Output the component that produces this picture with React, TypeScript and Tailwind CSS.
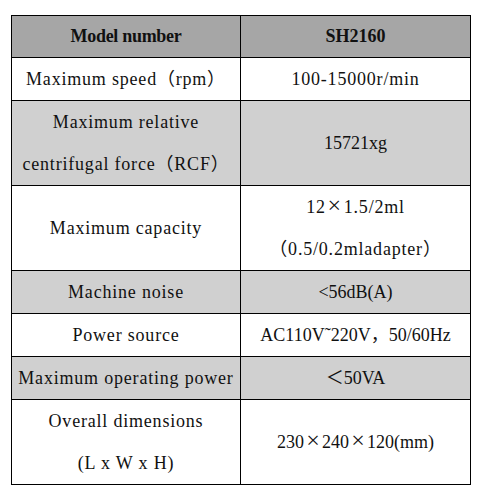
import React from "react";

type Cell = { lines: React.ReactNode[]; serif?: boolean };
type Row = { left: Cell; right: Cell; shade?: boolean };

// SimSun-style full width multiplication sign
const X = () => <span className="inline-block w-[18px] text-center text-[24px] leading-none font-light">×</span>;

const data: Row[] = [
  { left: { lines: ["Maximum speed（rpm）"] }, right: { lines: ["100-15000r/min"] } },
  {
    left: { lines: ["Maximum relative", "centrifugal force（RCF）"] },
    right: { lines: ["15721xg"], serif: true },
    shade: true,
  },
  {
    left: { lines: ["Maximum capacity"] },
    right: {
      lines: [
        <>
          12<X />1.5/2ml
        </>,
        "（0.5/0.2mladapter）",
      ],
    },
  },
  { left: { lines: ["Machine noise"] }, right: { lines: ["<56dB(A)"], serif: true }, shade: true },
  { left: { lines: ["Power source"] }, right: { lines: ["AC110V˜220V，50/60Hz"], serif: true } },
  {
    left: { lines: ["Maximum operating power"] },
    right: { lines: ["＜50VA"], serif: true },
    shade: true,
  },
  {
    left: { lines: ["Overall dimensions", "(L x W x H)"] },
    right: {
      lines: [
        <>
          230<X />240<X />120(mm)
        </>,
      ],
      serif: true,
    },
  },
];

const spaced = "font-['Liberation_Serif','Noto_Sans_CJK_SC',serif] text-[18px] tracking-[0.8px]";
const serif = "font-['Liberation_Serif','Noto_Sans_CJK_SC',serif] text-[18px]";

function CellText({ cell }: { cell: Cell }) {
  return (
    <div className={`${cell.serif ? serif : spaced} text-[#111] leading-[42px] whitespace-nowrap`}>
      {cell.lines.map((l, i) => (
        <div key={i}>{l}</div>
      ))}
    </div>
  );
}

export default function App() {
  return (
    <div className="w-[482px] h-[490px] bg-white pt-[15px] pl-[11px]">
      <table className="w-[459px] table-fixed border-collapse border border-black">
        <colgroup>
          <col className="w-[229px]" />
          <col className="w-[230px]" />
        </colgroup>
        <thead>
          <tr className="bg-[#a6a6a6]">
            <th className="border border-black p-0 h-[42px] text-center font-['Liberation_Serif',serif] text-[18px] font-bold text-[#111] tracking-[-0.3px]">
              Model number
            </th>
            <th className="border border-black p-0 h-[42px] text-center font-['Liberation_Serif',serif] text-[18px] font-bold text-[#111]">
              SH2160
            </th>
          </tr>
        </thead>
        <tbody>
          {data.map((r, i) => (
            <tr key={i} className={r.shade ? "bg-[#d0d0d0]" : "bg-white"}>
              <td className="border border-black p-0 text-center align-middle">
                <CellText cell={r.left} />
              </td>
              <td className="border border-black p-0 text-center align-middle">
                <CellText cell={r.right} />
              </td>
            </tr>
          ))}
        </tbody>
      </table>
    </div>
  );
}
